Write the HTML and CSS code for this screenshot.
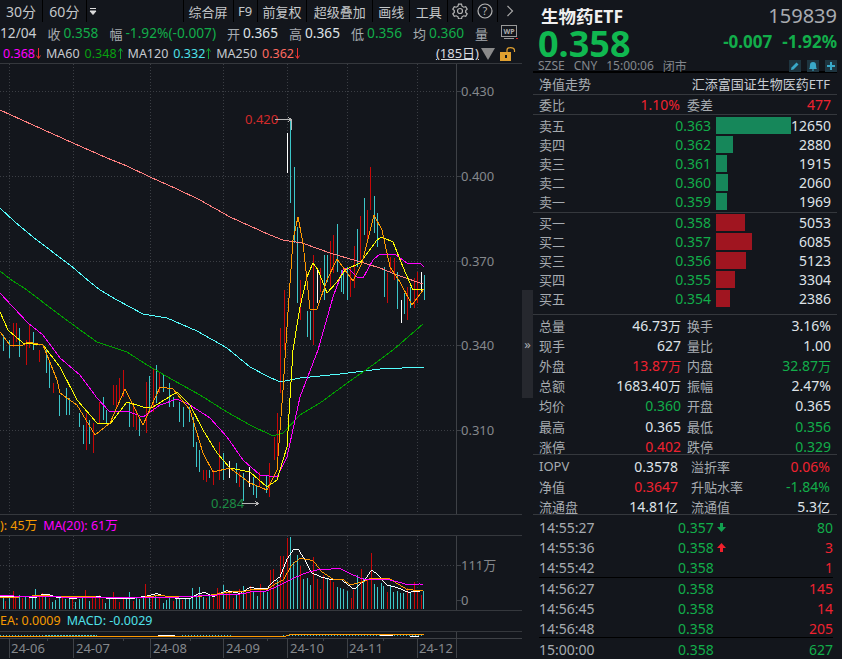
FILE: index.html
```html
<!DOCTYPE html>
<html lang="zh-CN">

<head>
    <meta charset="UTF-8">
    <title>生物药ETF 159839</title>
    <link rel="stylesheet" href="styles.css">
</head>

<body>
    <div class="page">
        <div class="left">
            <div class="toolbar">
                <span class="tool tool-30">30分</span>
                <span class="tool tool-60">60分</span>
                <span class="tool tool-menu">
                    <svg width="8" height="7" viewBox="0 0 8 7"><path d="M1 .5H7M1 3H7L4 6.5Z" fill="#ddd" stroke="#ddd" stroke-width="1"/></svg>
                </span>
                <span class="tool-space"></span>
                <span class="tool tool-a">综合屏</span>
                <span class="tool tool-b">F9</span>
                <span class="tool tool-a">前复权</span>
                <span class="tool tool-c">超级叠加</span>
                <span class="tool tool-d">画线</span>
                <span class="tool tool-e">工具</span>
                <span class="tool tool-icon">
                    <svg width="16" height="16" viewBox="0 0 16 16" fill="none" stroke="#b5b5b5"><circle cx="8" cy="8" r="2.5" stroke-width="1.2"/><path d="M6.5 1.2h3l.5 2 1.7 1 2-.6 1.5 2.6-1.5 1.4v1.8l1.5 1.4-1.5 2.6-2-.6-1.7 1-.5 2h-3l-.5-2-1.7-1-2 .6L.8 10.8l1.500-1.400V7.600L.8 6.200l1.500-2.600 2 .6 1.700-1z" stroke-width="1.2"/></svg>
                </span>
                <span class="tool tool-icon">
                    <svg width="16" height="16" viewBox="0 0 16 16"><circle cx="8" cy="8" r="7" fill="none" stroke="#b5b5b5" stroke-width="1.200"/><text x="8" y="12" text-anchor="middle" class="help-mark">?</text></svg>
                </span>
                <span class="tool tool-more">
                    <svg width="8" height="12" viewBox="0 0 8 12"><path d="M1.500 1L6.500 6L1.500 11" fill="none" stroke="#aaa" stroke-width="1.200"/></svg>
                </span>
            </div>

            <div class="info">
                <span class="num date">12/04</span>
                <span class="lb i1">收</span><span class="num green">0.358</span>
                <span class="lb i2">幅</span><span class="num green">-1.92%(-0.007)</span>
                <span class="lb i2">开</span><span class="num">0.365</span>
                <span class="lb i2">高</span><span class="num">0.365</span>
                <span class="lb i2">低</span><span class="num green">0.356</span>
                <span class="lb i2">均</span><span class="num green">0.360</span>
                <span class="lb i2">量</span>
                <svg class="wp" width="17" height="16" viewBox="0 0 17 16"><rect x=".5" y=".5" width="15" height="11" fill="none" stroke="#999"/><text x="8" y="9" text-anchor="middle" class="wp-text">WP</text><path d="M3 13.500H13" stroke="#999"/><path d="M15 13.500H17" stroke="#e02020"/></svg>
            </div>

            <div class="ma-row">
                <span class="num pink">0.368</span>
                <svg class="arr arr-down" width="5" height="11" viewBox="0 0 5 11"><path d="M2.500 0V10M.5 7.500L2.500 10.500L4.500 7.500"/></svg>
                <span class="num ma-name">MA60</span><span class="num ma60">0.348</span>
                <svg class="arr arr-up" width="5" height="11" viewBox="0 0 5 11"><path d="M2.500 11V1M.5 3.500L2.500 .5L4.500 3.500"/></svg>
                <span class="num ma-name">MA120</span><span class="num ma120">0.332</span>
                <svg class="arr arr-up" width="5" height="11" viewBox="0 0 5 11"><path d="M2.500 11V1M.5 3.500L2.500 .5L4.500 3.500"/></svg>
                <span class="num ma-name">MA250</span><span class="num ma250">0.362</span>
                <svg class="arr arr-down" width="5" height="11" viewBox="0 0 5 11"><path d="M2.500 0V10M.5 7.500L2.500 10.500L4.500 7.500"/></svg>
                <span class="ma-space"></span>
                <span class="num days">(185日)</span>
                <svg class="tri" width="14" height="12" viewBox="0 0 14 12"><path d="M0 0H14L7 12Z" fill="#8a8a8a"/></svg>
                <svg class="lock" width="16" height="14" viewBox="0 0 16 14"><rect x="0" y="5" width="11" height="9" fill="#e0a030"/><rect x="5" y="8" width="2" height="3" fill="#14171c"/><path d="M7 5V3Q7 .6 10.500 .6T14.500 3V5" fill="none" stroke="#e0a030" stroke-width="1.200"/></svg>
            </div>

            <svg class="pane price-pane" width="522" height="450" viewBox="0 64 522 450">
                <g class="grid">
                    <path d="M0 91.500H456M0 176.500H456M0 261.500H456M0 345.500H456M0 430.500H456"/>
                    <path d="M9.500 64V514M73.500 64V514M150.500 64V514M223.500 64V514M287.500 64V514M347.500 64V514M417.500 64V514"/>
                </g>
                <path class="axis" d="M456.500 64V514M456 91.500H461M456 176.500H461M456 261.500H461M456 345.500H461M456 430.500H461"/>

                <g transform="translate(0 290) scale(.33333)" class="candles">
                    <path class="c-cyan" d="M10 135V183M28 150V205M58 115V200M100 125V180M140 180V250M150 220V295M180 315V378M200 295V375M210 325V375M240 370V410M250 405V462M270 390V462M310 320V390M320 360V400M390 340V410M420 380V437M450 258V358M470 225V340M490 255V305M510 280V350M520 320V350M540 335V395M550 350V410M570 350V395M580 380V470M590 455V530M600 480V545M630 540V565M670 490V570M710 520V580M730 550V632M760 560V615M770 585V625M800 555V610"/>
                    <path class="c-red" d="M40 100V170M50 100V155M80 150V225M88 105V175M118 180V215M160 280V310M260 370V480M280 400V490M300 335V400M340 285V345M350 285V355M360 265V340M370 240V320M400 345V410M410 360V420M440 275V430M460 235V365M480 250V310M610 540V570M620 540V575M640 540V585M660 455V570M720 545V590M780 545V590M810 520V622M825 440V510M832 370V500M842 115V310M855 0V180"/>
                    <path class="c-white" d="M690 512V565M750 530V590"/>
                </g>
                <g transform="translate(230 100) scale(.33333)" class="candles">
                    <path class="c-cyan" d="M182 60V310M193 200V430M202 380V608M232 632V710M242 632V720M283 465V600M292 465V545M322 372V515M335 510V575M342 520V583M352 500V600M383 387V500M403 295V405M433 288V400M443 340V440M463 500V590M503 515V628M523 580V642M543 560V625M583 525V600"/>
                    <path class="c-red" d="M212 540V660M252 465V735M272 505V575M302 422V560M312 405V520M363 500V590M373 437V565M393 348V480M413 330V430M423 200V330M473 520V608M483 470V520M493 475V540M533 560V660M553 535V625M563 515V610"/>
                    <path class="c-white" d="M172 100V218M262 510V608M514 600V668M574 515V575"/>
                </g>

                <polyline class="ln ma250-ln" points="0,110 33,125 73,143 107,158 127,166 150,177 177,189 200,200 230,217 250,226 270,235 283,240 302,243 330,253 357,261 380,268 397,275 423,284"/>
                <polyline class="ln ma120-ln" points="0,208 15,222 33,237 50,250 70,265 90,282 100,290 117,300 143,314 167,318 197,331 227,348 250,367 267,376 280,382 300,378 340,374 380,369 424,367"/>
                <polyline class="ln ma60-ln" points="0,271 10,279 27,290 57,313 83,332 97,342 127,352 147,365 173,380 200,395 227,412 250,425 273,436 283,433 300,415 320,403 350,381 370,367 393,350 423,324"/>
                <polyline class="ln ma20-ln" points="0,293 13,307 28,323 43,335 60,358 80,375 97,398 110,412 127,411 143,417 160,405 177,399 190,405 210,418 227,437 243,460 260,475 277,477 287,457 300,397 318,350 333,297 343,270 348,268 357,277 363,278 373,260 380,254 395,254 407,263 420,263 424,267"/>
                <polyline class="ln ma10-ln" points="0,312 8,330 23,343 43,345 60,367 77,400 97,423 110,424 127,402 143,407 153,407 177,392 190,405 203,430 217,453 230,468 250,472 267,487 277,480 287,447 293,350 300,307 307,277 313,263 318,270 327,293 337,282 345,270 360,263 377,240 382,237 393,242 403,267 413,290 424,289"/>
                <polyline class="ln ma5-ln" points="0,332 10,345 23,345 28,342 43,345 57,380 60,393 77,405 95,435 110,423 125,389 143,425 160,387 173,389 190,410 203,453 213,472 230,468 250,483 267,490 277,470 283,390 287,327 293,240 298,217 303,243 310,309 317,309 327,280 337,259 345,270 353,281 362,263 374,215 382,230 390,267 400,282 412,305 424,289"/>

                <text x="245" y="124" class="mark mark-red">0.420</text>
                <path class="mark-arrow" d="M275 119.500H291M288 117L291 119.500L288 122M291.500 120V130"/>
                <text x="211" y="508" class="mark mark-green">0.284</text>
                <path class="mark-arrow" d="M242 503.500H258M255 501L258 503.500L255 506"/>

                <text x="461" y="96" class="axis-text">0.430</text>
                <text x="461" y="181" class="axis-text">0.400</text>
                <text x="461" y="266" class="axis-text">0.370</text>
                <text x="461" y="350" class="axis-text">0.340</text>
                <text x="461" y="435" class="axis-text">0.310</text>
            </svg>

            <div class="pane-head">
                <span class="orange">): 45万</span>
                <span class="pink">MA(20): 61万</span>
            </div>

            <svg class="pane vol-pane" width="522" height="74" viewBox="0 536 522 74">
                <g class="grid">
                    <path d="M0 565.500H456"/>
                    <path d="M9.500 536V610M73.500 536V610M150.500 536V610M223.500 536V610M287.500 536V610M347.500 536V610M417.500 536V610"/>
                </g>
                <path class="axis" d="M456.500 536V610M456 565.500H461M456 600.500H461"/>

                <g transform="translate(0 535) scale(.33333)" class="candles">
                    <path class="c-cyan" d="M10 190V222M28 190V222M58 180V222M78 185V222M98 190V222M108 162V222M138 185V222M158 200V222M168 195V222M178 190V222M198 192V222M208 190V222M228 200V222M238 192V222M248 185V222M268 197V222M318 203V222M328 192V222M380 190V222M390 170V222M410 190V222M420 192V222M430 190V222M448 190V222M468 180V222M490 205V222M500 195V222M510 188V222M530 190V222M540 190V222M558 192V222M568 192V222M578 158V222M590 180V222M600 155V222M610 185V222M630 180V222M670 150V222M710 180V222M730 152V222"/>
                    <path class="c-red" d="M18 197V222M40 168V222M48 185V222M68 188V222M88 190V222M118 185V222M128 175V222M148 190V222M188 188V222M218 192V222M258 165V222M278 185V222M288 190V222M300 180V222M308 192V222M340 170V222M348 190V222M360 200V222M370 192V222M400 197V222M438 147V222M458 185V222M480 190V222M520 198V222M548 195V222M620 190V222M640 190V222M652 158V222M660 170V222M680 175V222M690 165V222M700 190V222M720 162V222M740 170V222"/>
                    <polyline class="ln-s vol-white" points="0,183 60,185 110,187 128,178 150,180 170,187 225,190 250,185 300,185 330,192 400,190 440,183 470,176 490,182 530,190 570,192 590,178 615,172 640,185 680,167 720,175 750,157"/>
                    <polyline class="ln-s vol-orange" points="0,187 60,186 120,181 180,185 260,185 340,188 420,188 470,182 570,186 620,182 680,172 740,168 750,166"/>
                    <polyline class="ln-s vol-pink" points="0,182 120,185 300,188 430,188 540,186 630,181 720,177 750,172"/>
                </g>
                <g transform="translate(250 530) scale(.33333)" class="candles">
                    <path class="c-cyan" d="M12 185V237M22 197V237M42 185V237M52 185V237M82 150V237M122 20V237M132 95V237M142 75V237M162 148V237M172 145V237M182 165V237M232 145V237M262 170V237M272 175V237M282 178V237M292 182V237M322 135V237M342 145V237M374 162V237M382 172V237M394 160V237M402 168V237M422 165V237M432 185V237M442 183V237M452 188V237M462 190V237M482 190V237M522 183V237"/>
                    <path class="c-red" d="M2 168V237M32 162V237M62 120V237M72 118V237M92 78V237M102 78V237M112 25V237M152 108V237M192 82V237M202 148V237M212 178V237M222 135V237M242 150V237M252 155V237M304 205V237M312 180V237M334 118V237M352 150V237M364 70V237M412 185V237M474 175V237M494 155V237M502 180V237M514 195V237"/>
                    <polyline class="ln-s vol-white" points="0,173 50,177 70,155 90,140 110,90 130,60 145,58 165,90 185,128 210,140 240,148 275,150 312,178 345,150 365,120 385,135 410,165 440,172 475,187 520,182"/>
                    <polyline class="ln-s vol-orange" points="0,180 50,180 75,162 100,150 125,105 150,85 190,92 215,125 250,148 280,148 300,165 340,155 360,145 420,147 470,178 520,183"/>
                    <polyline class="ln-s vol-pink" points="0,185 50,183 80,170 130,145 170,128 200,120 270,115 310,135 340,148 420,150 470,163 510,162 520,165"/>
                </g>

                <text x="461" y="570" class="axis-text">111万</text>
                <text x="461" y="605" class="axis-text">0</text>
            </svg>

            <div class="pane-head">
                <span class="orange">EA: 0.0009</span>
                <span class="cyan">MACD: -0.0029</span>
            </div>

            <svg class="pane macd-pane" width="522" height="6" viewBox="0 632 522 6">
                <path class="axis" d="M456.500 632V638"/>
                <path class="macd-dots" d="M0 635.500H97M46 635.500H97M182 635.500H231M283 635.500H424"/>
                <path class="macd-white" d="M158 635.500H175M289 634.500H306M380 635.500H393M410 636.500H419"/>
                <path class="macd-orange" d="M0 636.500H285L290 634.500H424"/>
            </svg>

            <svg class="pane time-pane" width="522" height="20" viewBox="0 639 522 20">
                <path class="axis" d="M0 639.500H522M9.500 639V659M73.500 639V659M150.500 639V659M223.500 639V659M287.500 639V659M347.500 639V659M417.500 639V659M456.500 639V659"/>
                <path class="axis" d="M47 639V642M123 639V642M190 639V642M267 639V642M323 639V642M383 639V642"/>
                <text x="11" y="654" class="axis-text">24-06</text>
                <text x="76" y="654" class="axis-text">24-07</text>
                <text x="153" y="654" class="axis-text">24-08</text>
                <text x="226" y="654" class="axis-text">24-09</text>
                <text x="290" y="654" class="axis-text">24-10</text>
                <text x="349" y="654" class="axis-text">24-11</text>
                <text x="419" y="654" class="axis-text">24-12</text>
            </svg>
        </div>

        <div class="gutter">
            <div class="collapse">»</div>
        </div>

        <div class="right">
            <div class="head">
                <div class="head-top">
                    <span class="stock-name">生物药ETF</span>
                    <span class="stock-code">159839</span>
                </div>
                <div class="head-price">
                    <span class="last">0.358</span>
                    <span class="change">-0.007</span>
                    <span class="change change-pct">-1.92%</span>
                </div>
                <div class="head-status">
                    <span class="status">SZSE</span>
                    <span class="status">CNY</span>
                    <span class="status">15:00:06</span>
                    <span class="status">闭市</span>
                    <span class="status-space"></span>
                    <span class="mini">
                        <svg width="10" height="10" viewBox="0 0 10 10"><path d="M1 9L1.500 6.500L6.500 1.500L8.500 3.500L3.500 8.500Z" fill="#39a9c9"/></svg>
                    </span>
                    <span class="mini">
                        <svg width="10" height="10" viewBox="0 0 10 10"><path d="M1 8Q2 7 2 4Q2 1 5 1T8 4Q8 7 9 8Z" fill="#39a9c9"/><path d="M4 9H6" stroke="#39a9c9"/></svg>
                    </span>
                    <span class="mini">
                        <svg width="10" height="10" viewBox="0 0 10 10"><path d="M4 1H6V4H9V6H6V9H4V6H1V4H4Z" fill="#39a9c9"/></svg>
                    </span>
                </div>
            </div>

            <div class="sec nav-row">
                <span class="lb">净值走势</span>
                <span class="fund">汇添富国证生物医药ETF</span>
            </div>

            <div class="sec ratio-row">
                <span class="lb">委比</span>
                <span class="num red ratio-val">1.10%</span>
                <span class="lb ratio-lb">委差</span>
                <span class="num red ratio-end">477</span>
            </div>

            <div class="sec book">
                <div class="book-row"><span class="lb">卖五</span><span class="num green px">0.363</span><div class="vol-cell"><i class="bar bar-sell" style="width:75px"></i><span class="num">12650</span></div></div>
                <div class="book-row"><span class="lb">卖四</span><span class="num green px">0.362</span><div class="vol-cell"><i class="bar bar-sell" style="width:17px"></i><span class="num">2880</span></div></div>
                <div class="book-row"><span class="lb">卖三</span><span class="num green px">0.361</span><div class="vol-cell"><i class="bar bar-sell" style="width:11px"></i><span class="num">1915</span></div></div>
                <div class="book-row"><span class="lb">卖二</span><span class="num green px">0.360</span><div class="vol-cell"><i class="bar bar-sell" style="width:12px"></i><span class="num">2060</span></div></div>
                <div class="book-row"><span class="lb">卖一</span><span class="num green px">0.359</span><div class="vol-cell"><i class="bar bar-sell" style="width:11px"></i><span class="num">1969</span></div></div>
            </div>

            <div class="sec book book-buy">
                <div class="book-row"><span class="lb">买一</span><span class="num green px">0.358</span><div class="vol-cell"><i class="bar bar-buy" style="width:29px"></i><span class="num">5053</span></div></div>
                <div class="book-row"><span class="lb">买二</span><span class="num green px">0.357</span><div class="vol-cell"><i class="bar bar-buy" style="width:36px"></i><span class="num">6085</span></div></div>
                <div class="book-row"><span class="lb">买三</span><span class="num green px">0.356</span><div class="vol-cell"><i class="bar bar-buy" style="width:30px"></i><span class="num">5123</span></div></div>
                <div class="book-row"><span class="lb">买四</span><span class="num green px">0.355</span><div class="vol-cell"><i class="bar bar-buy" style="width:19px"></i><span class="num">3304</span></div></div>
                <div class="book-row"><span class="lb">买五</span><span class="num green px">0.354</span><div class="vol-cell"><i class="bar bar-buy" style="width:14px"></i><span class="num">2386</span></div></div>
            </div>

            <div class="sec stats">
                <span class="lb">总量</span><span class="num val">46.73<em class="lb-w">万</em></span><span class="lb">换手</span><span class="num val">3.16%</span>
                <span class="lb">现手</span><span class="num val">627</span><span class="lb">量比</span><span class="num val">1.00</span>
                <span class="lb">外盘</span><span class="num val red">13.87<em class="lb-w">万</em></span><span class="lb">内盘</span><span class="num val green">32.87<em class="lb-w">万</em></span>
                <span class="lb">总额</span><span class="num val">1683.40<em class="lb-w">万</em></span><span class="lb">振幅</span><span class="num val">2.47%</span>
                <span class="lb">均价</span><span class="num val green">0.360</span><span class="lb">开盘</span><span class="num val">0.365</span>
                <span class="lb">最高</span><span class="num val">0.365</span><span class="lb">最低</span><span class="num val green">0.356</span>
                <span class="lb">涨停</span><span class="num val red">0.402</span><span class="lb">跌停</span><span class="num val green">0.329</span>
            </div>

            <div class="sec iopv">
                <span class="lb">IOPV</span><span class="num val">0.3578</span><span class="lb lb2">溢折率</span><span class="num val red">0.06%</span>
                <span class="lb">净值</span><span class="num val red">0.3647</span><span class="lb lb2">升贴水率</span><span class="num val green">-1.84%</span>
                <span class="lb">流通盘</span><span class="num val">14.81<em class="lb-w">亿</em></span><span class="lb lb2">流通值</span><span class="num val">5.3<em class="lb-w">亿</em></span>
            </div>

            <div class="trades">
                <div class="trade-group group-a">
                    <div class="trade"><span class="num time">14:55:27</span><span class="num green tp">0.357</span><svg class="tick" width="9" height="9" viewBox="0 0 9 9"><path d="M3 0H6V4H9L4.500 9L0 4H3Z" fill="#12a050"/></svg><span class="num green tv">80</span></div>
                    <div class="trade"><span class="num time">14:55:36</span><span class="num green tp">0.358</span><svg class="tick" width="9" height="9" viewBox="0 0 9 9"><path d="M3 9H6V5H9L4.500 0L0 5H3Z" fill="#f0202c"/></svg><span class="num red tv">3</span></div>
                    <div class="trade"><span class="num time">14:55:42</span><span class="num green tp">0.358</span><span class="tick"></span><span class="num red tv">1</span></div>
                </div>
                <div class="trade-group group-b">
                    <div class="trade"><span class="num time">14:56:27</span><span class="num green tp">0.358</span><span class="tick"></span><span class="num red tv">145</span></div>
                    <div class="trade"><span class="num time">14:56:45</span><span class="num green tp">0.358</span><span class="tick"></span><span class="num red tv">14</span></div>
                    <div class="trade"><span class="num time">14:56:48</span><span class="num green tp">0.358</span><span class="tick"></span><span class="num red tv">205</span></div>
                </div>
                <div class="trade-group group-c">
                    <div class="trade"><span class="num time">15:00:00</span><span class="num green tp">0.358</span><span class="tick"></span><span class="num green tv">627</span></div>
                </div>
            </div>
        </div>
    </div>
</body>

</html>
```

FILE: styles.css
```css
* {
    box-sizing: border-box;
}

body {
    margin: 0;
    background: #13161c;
    color: #dfe3e8;
    font-family: "Noto Sans", "Noto Sans CJK SC", sans-serif;
    overflow: hidden;
}

.page {
    display: flex;
    width: 842px;
    height: 659px;
    overflow: hidden;
}

.num {
    font-size: 14px;
    white-space: nowrap;
}

.lb {
    font-size: 13px;
    color: #a6abb0;
    white-space: nowrap;
}

.lb-w {
    font-size: 13px;
    font-style: normal;
}

.green { color: #12ad4a; }
.red { color: #ef2230; }
.pink { color: #f0f; }
.orange { color: #f59a00; }
.cyan { color: #4fe0e8; }

/* left column */
.left {
    width: 522px;
    flex: none;
}

.toolbar {
    display: flex;
    height: 22px;
    align-items: center;
    font-size: 13px;
    color: #c4c7ca;
}

.tool {
    display: flex;
    height: 22px;
    align-items: center;
    justify-content: center;
    border-right: 1px solid #000;
}

.tool-30 { width: 43px; font-size: 14px; }
.tool-60 { width: 44px; font-size: 14px; }
.tool-menu { width: 13px; border: 0; }
.tool-space { width: 84px; height: 22px; border-right: 1px solid #000; }
.tool-a { width: 50px; }
.tool-b { width: 24px; }
.tool-c { width: 66px; }
.tool-d { width: 37px; }
.tool-e { width: 38px; }
.tool-icon { width: 25px; }
.tool-more { width: 24px; border: 0; }

.help-mark {
    font-size: 11px;
    fill: #b5b5b5;
}

.info {
    display: flex;
    height: 22px;
    align-items: center;
}

.info .num { line-height: 22px; font-size: 13.7px; }
.i1 { margin-left: 11px; margin-right: 3px; }
.i2 { margin-left: 11px; margin-right: 3px; }
.date { color: #c9cdd1; }

.wp {
    flex: none;
    margin-left: 10px;
}

.wp-text {
    font-size: 7px;
    font-weight: 700;
    fill: #aaa;
}

.ma-row {
    display: flex;
    height: 20px;
    align-items: center;
    padding-left: 3px;
    border-bottom: 1px solid #35383d;
}

.ma-row .num { line-height: 19px; font-size: 12.5px; }
.ma-name { margin-left: 5px; margin-right: 5px; color: #c6cad0; }
.ma60 { color: #08a010; }
.ma120 { color: #4fe0e8; }
.ma250 { color: #ff6a60; }
.ma-space { flex: 1; }
.ma-row .days { color: #d8dbe0; text-decoration: underline; font-size: 13px; }

.arr {
    flex: none;
    margin-left: 1px;
    fill: none;
}

.arr-down { stroke: #f03030; }
.arr-up { stroke: #12a030; }

.tri { flex: none; margin-left: 2px; }
.lock { flex: none; margin-left: 5px; margin-right: 6px; }

.pane {
    display: block;
}

.grid {
    fill: none;
    stroke: #3b3e44;
    stroke-dasharray: 1 2;
    shape-rendering: crispEdges;
}

.axis {
    fill: none;
    stroke: #3e4146;
    shape-rendering: crispEdges;
}

.axis-text {
    font-size: 13px;
    fill: #85888c;
}

.candles path {
    fill: none;
    stroke-width: 3;
    shape-rendering: crispEdges;
}

.c-cyan { stroke: #3cc6c9; }
.c-red { stroke: #c80808; }
.c-white { stroke: #fff; }

.ln {
    fill: none;
    stroke-width: 1;
    shape-rendering: crispEdges;
}

.ln-s {
    fill: none;
    stroke-width: 3;
    shape-rendering: crispEdges;
}

.ma5-ln { stroke: #f90; }
.ma10-ln { stroke: #ff0; }
.ma20-ln { stroke: #f0f; }
.ma60-ln { stroke: #00a000; }
.ma120-ln { stroke: #55ffff; }
.ma250-ln { stroke: #ff8080; }
.vol-white { stroke: #fff; }
.vol-orange { stroke: #f90; }
.vol-pink { stroke: #f0f; }

.mark { font-size: 13px; }
.mark-red { fill: #d32a2a; }
.mark-green { fill: #1c8c44; }

.mark-arrow {
    fill: none;
    stroke: #b8b8b8;
    shape-rendering: crispEdges;
}

.pane-head {
    display: flex;
    height: 22px;
    align-items: center;
    gap: 6px;
    padding-bottom: 2px;
    font-size: 12.5px;
    border-top: 1px solid #35383d;
    border-bottom: 1px solid #35383d;
}

.macd-dots {
    fill: none;
    stroke: #3cc6c9;
    stroke-dasharray: 1 2;
}

.macd-white {
    fill: none;
    stroke: #fff;
    shape-rendering: crispEdges;
}

.macd-orange {
    fill: none;
    stroke: #f90;
    shape-rendering: crispEdges;
}

/* gutter with the collapse tab */
.gutter {
    width: 11px;
    flex: none;
    padding-top: 290px;
}

.collapse {
    display: flex;
    height: 108px;
    align-items: center;
    justify-content: center;
    background: #26282e;
    color: #a9adb2;
    font-size: 13px;
}

/* right column */
.right {
    width: 304px;
    flex: none;
}

.head {
    height: 73px;
    border-bottom: 2px solid #000;
    padding: 0 0 0 5px;
}

.head-top {
    display: flex;
    height: 27px;
    align-items: center;
    justify-content: space-between;
    padding-top: 3px;
}

.stock-name {
    margin-left: 3px;
    font-size: 17.5px;
    font-weight: 700;
    color: #f0f0f0;
}

.stock-code {
    font-size: 20px;
    color: #a8abb0;
}

.head-price {
    display: flex;
    height: 32px;
    align-items: center;
}

.last {
    font-size: 36px;
    line-height: 31px;
    font-weight: 700;
    color: #10b850;
    margin-right: auto;
}

.change {
    font-size: 17px;
    font-weight: 700;
    color: #12ad4a;
    margin-bottom: 4px;
}

.change-pct {
    margin-left: 10px;
}

.head-status {
    display: flex;
    height: 13px;
    align-items: center;
    gap: 9px;
}

.status {
    font-size: 12px;
    color: #84888d;
}

.status-space {
    flex: 1;
}

.mini {
    display: flex;
    width: 12px;
    height: 12px;
    align-items: center;
    justify-content: center;
    background: #1e3540;
    margin-left: -3px;
}

.sec {
    border-bottom: 1px solid #35383d;
    padding-left: 6px;
}

.nav-row {
    display: flex;
    height: 22px;
    align-items: center;
    justify-content: space-between;
    padding-right: 7px;
}

.fund {
    font-size: 13px;
    color: #c8ccd2;
}

.ratio-row {
    display: flex;
    height: 20px;
    align-items: center;
}

.ratio-val { width: 115px; text-align: right; }
.ratio-lb { margin-left: 7px; }
.ratio-end { margin-left: auto; padding-right: 6px; }

.book {
    height: 98px;
    padding-top: 1px;
    padding-right: 6px;
}

.book-buy {
    height: 102px;
    padding-top: 0;
}

.book-row {
    display: flex;
    height: 19px;
    align-items: center;
}

.book-row .lb { width: 26px; }

.px {
    width: 146px;
    text-align: right;
}

.vol-cell {
    display: flex;
    flex: 1;
    height: 19px;
    align-items: center;
    justify-content: space-between;
    margin-left: 5px;
}

.bar {
    display: block;
    height: 17px;
}

.bar-sell { background: #16875a; }
.bar-buy { background: #a01520; }

.stats {
    display: grid;
    grid-template-columns: 26px 110px 27px 1fr;
    grid-auto-rows: 20.2px;
    column-gap: 6px;
    align-items: center;
    height: 140px;
    padding-right: 6px;
}

.val { text-align: right; }

.iopv {
    display: grid;
    grid-template-columns: 44px 95px 65px 1fr;
    grid-auto-rows: 20px;
    align-items: center;
    height: 60px;
    padding-top: 1px;
    padding-right: 7px;
}

.lb2 {
    padding-left: 13px;
}

.trades {
    padding: 2px 4px 0 6px;
}

.trade-group {
    border-bottom: 1px solid #000;
}

.group-a { height: 61px; }
.group-b { height: 60px; }

.group-c {
    padding-top: 1px;
    border-bottom: 0;
}

.trade {
    display: flex;
    height: 20px;
    align-items: center;
}

.time {
    width: 139px;
    color: #a6abb0;
}

.tp {
    width: 36px;
}

.tick {
    display: block;
    width: 9px;
    margin-left: 3px;
}

.tv {
    flex: 1;
    text-align: right;
}
```
